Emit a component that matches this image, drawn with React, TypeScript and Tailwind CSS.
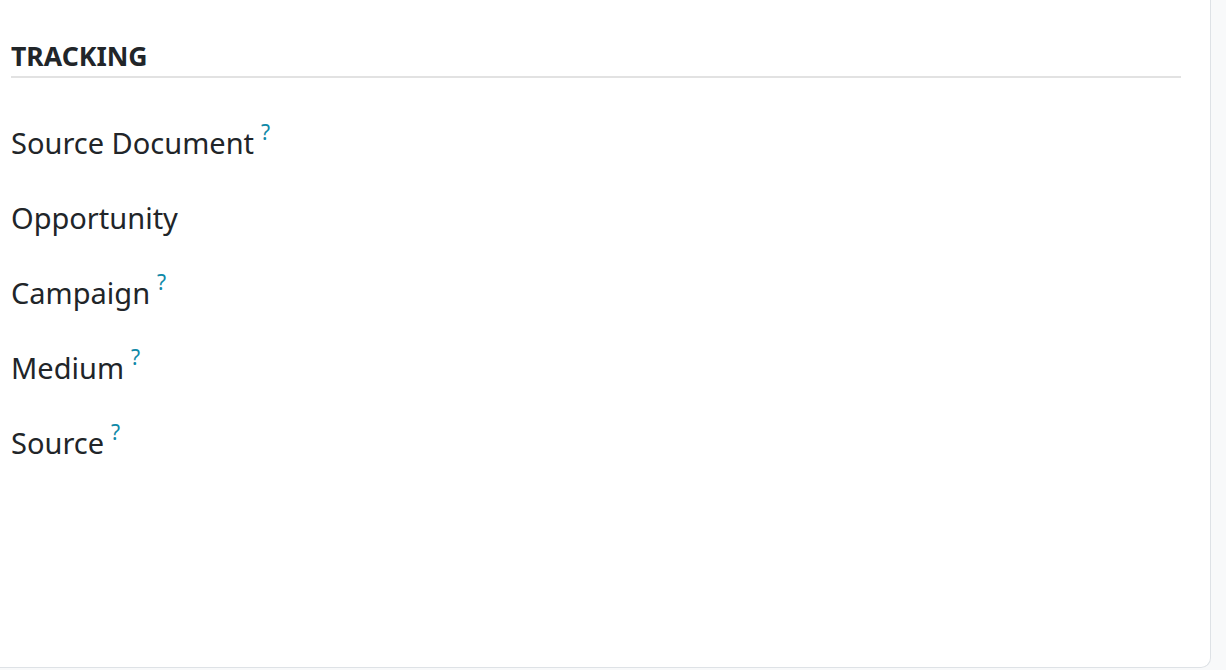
import React from 'react';

const fields: { label: string; help: boolean }[] = [
  { label: 'Source Document', help: true },
  { label: 'Opportunity', help: false },
  { label: 'Campaign', help: true },
  { label: 'Medium', help: true },
  { label: 'Source', help: true },
];

const App: React.FC = () => {
  return (
    <div className="w-[1226px] h-[670px] bg-[#f8f9fa] flex overflow-hidden" style={{ fontFamily: '"Noto Sans", sans-serif' }}>
      {/* Sheet */}
      <div className="w-[1211px] h-[668px] bg-white border-r border-b border-[#dee2e6] rounded-br-[10px] pl-[11px] pr-[29px] pt-[40px] text-[#212529]">
        <h2 className="text-[26.6px] font-bold leading-[32px] pb-[4px] border-b-2 border-[#e2e2e2]">TRACKING</h2>
        <div className="flex flex-col pt-[45px] gap-[35px]">
          {fields.map((f) => (
            <div key={f.label} className="flex items-start h-[40px]">
              <span className="text-[29px] leading-[40px]">{f.label}</span>
              {f.help && <span className="text-[21px] text-[#0f89a8] ml-[7px] leading-[20px] mt-[-1px]">?</span>}
            </div>
          ))}
        </div>
      </div>
    </div>
  );
};

export default App;
